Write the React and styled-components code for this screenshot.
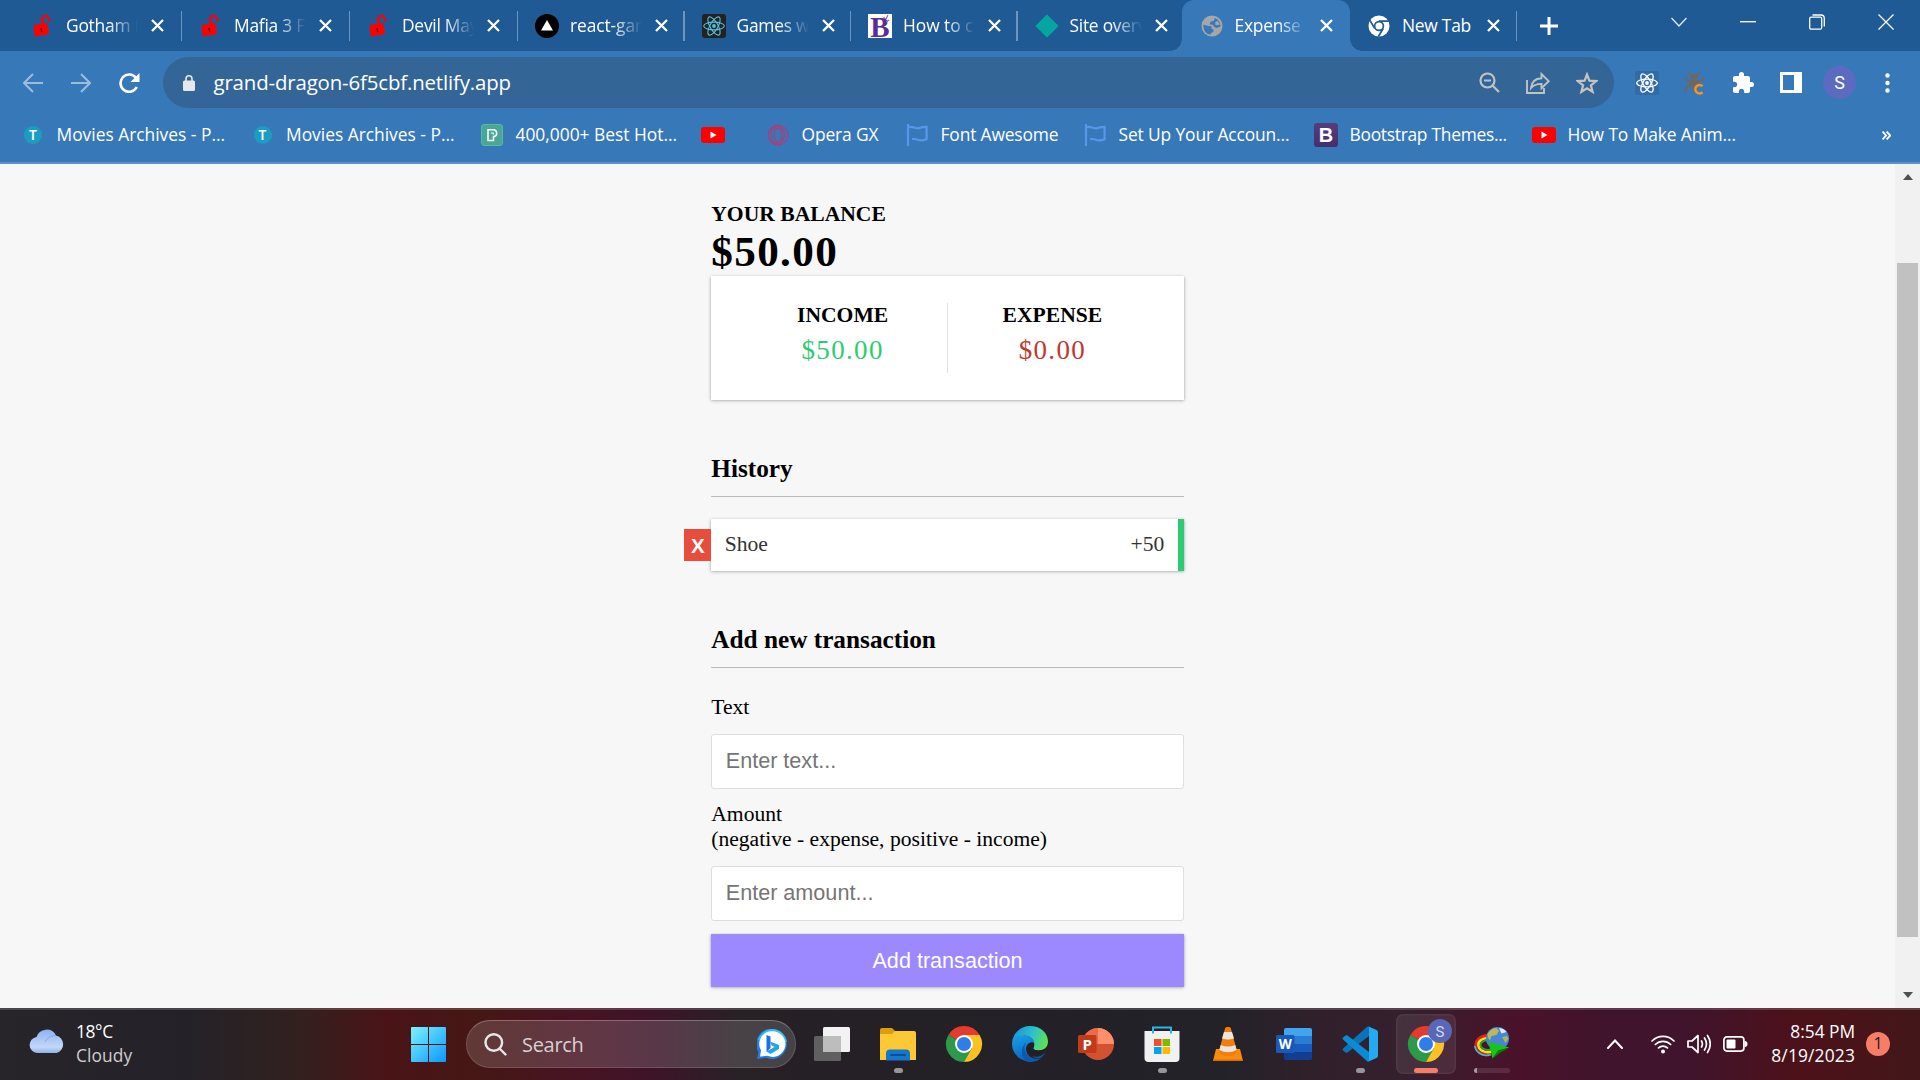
import React from "react";
import styled, { createGlobalStyle, css } from "styled-components";

const GlobalStyle = createGlobalStyle`
  * { box-sizing: border-box; }
  body { margin: 0; overflow: hidden; background: #f7f7f7; }
`;

const uiFont = css`
  font-family: "Open Sans", "Noto Sans", sans-serif;
  white-space: nowrap;
`;

const Screen = styled.div`
  width: 1920px;
  height: 1080px;
  display: flex;
  flex-direction: column;
  overflow: hidden;
`;

/* ---------- browser chrome ---------- */

const TabStrip = styled.div`
  display: flex;
  height: 51px;
  flex: none;
  padding-left: 14px;
  background: #1f5a95;
`;

const Tab = styled.div`
  position: relative;
  display: flex;
  align-items: center;
  width: ${(p) => p.$w}px;
  height: 51px;
  flex: none;
  padding-left: 17px;
  ${(p) =>
    p.$active &&
    css`
      z-index: 1;
      padding-left: 18px;
      background: #3778b9;
      border-radius: 12px 12px 0 0;
      &::before,
      &::after {
        content: "";
        position: absolute;
        bottom: 0;
        width: 12px;
        height: 12px;
      }
      &::before {
        left: -12px;
        background: radial-gradient(circle at 0 0, transparent 11.5px, #3778b9 12px);
      }
      &::after {
        right: -12px;
        background: radial-gradient(circle at 100% 0, transparent 11.5px, #3778b9 12px);
      }
    `}
`;

const TabIcon = styled.span`
  display: flex;
  width: 24px;
  height: 24px;
  flex: none;
`;

const TabTitle = styled.span`
  ${uiFont}
  width: 73px;
  margin-left: 11px;
  padding-bottom: 1px;
  overflow: hidden;
  color: #fff;
  font-size: 17.4px;
  line-height: 28px;
  letter-spacing: ${(p) => p.$ls ?? -0.25}px;
  ${(p) =>
    p.$fade &&
    css`
      mask-image: linear-gradient(90deg, #000 42px, transparent 72px);
    `}
`;

const TabClose = styled.span`
  display: flex;
  margin-left: 12px;
`;

const TabDivider = styled.span`
  width: 1.5px;
  height: 30px;
  margin: 1px 0 0 auto;
  background: #6d96bf;
`;

const NewTab = styled.div`
  display: flex;
  align-items: center;
  margin-left: 23px;
`;

const WindowControls = styled.div`
  display: flex;
  align-items: center;
  gap: 53px;
  height: 43px;
  margin: 0 26px 0 auto;
`;

const Toolbar = styled.div`
  display: flex;
  align-items: center;
  height: 63px;
  flex: none;
  padding-left: 23px;
  background: #3778b9;
`;

const NavButtons = styled.div`
  display: flex;
  gap: 28px;
`;

const Omnibox = styled.div`
  display: flex;
  align-items: center;
  width: 1451px;
  height: 51px;
  margin-left: 22.5px;
  padding: 0 16px 0 20px;
  border-radius: 26px;
  background: #336697;
`;

const Url = styled.span`
  ${uiFont}
  flex: 1;
  margin-left: 19px;
  padding-bottom: 1px;
  color: #fff;
  font-size: 20.4px;
  letter-spacing: -0.14px;
`;

const OmniActions = styled.div`
  display: flex;
  align-items: center;
  gap: 26px;
`;

const Extensions = styled.div`
  display: flex;
  align-items: center;
  gap: 25px;
  margin-left: 21.5px;
`;

const Avatar = styled.span`
  ${uiFont}
  width: 33px;
  height: 33px;
  margin: 0 -1px 0 -4px;
  border-radius: 50%;
  background: #5c6bc0;
  color: #fff;
  font-family: Roboto, sans-serif;
  font-size: 18px;
  line-height: 33px;
  text-align: center;
`;

const Bookmarks = styled.div`
  display: flex;
  align-items: center;
  height: 50px;
  flex: none;
  padding: 0 29px 6px 21px;
  border-bottom: 2px solid #5b92c7;
  background: #3778b9;
`;

const Bookmark = styled.div`
  display: flex;
  align-items: center;
  gap: 11.5px;
  flex: none;
  width: ${(p) => p.$w}px;
`;

const BookmarkIcon = styled.span`
  display: flex;
  justify-content: center;
  width: 24px;
  flex: none;
`;

const BookmarkLabel = styled.span`
  ${uiFont}
  padding-bottom: 2px;
  color: #fff;
  font-size: 17.4px;
  letter-spacing: ${(p) => p.$ls ?? -0.1}px;
`;

const More = styled.span`
  display: flex;
  margin-left: auto;
`;

/* ---------- page ---------- */

const Viewport = styled.div`
  display: flex;
  height: 844px;
  flex: none;
  background: #f7f7f7;
`;

const Page = styled.main`
  flex: 1;
  display: flex;
  justify-content: center;
  font-family: "Liberation Serif", "Times New Roman", serif;
  font-size: 21.6px;
  line-height: 25px;
  color: #000;
`;

const Column = styled.div`
  width: 472.5px;
  padding-top: 38px;
`;

const Caption = styled.h4`
  margin: 0;
  font-size: 21.6px;
  line-height: 25px;
  text-transform: uppercase;
`;

const Balance = styled.h1`
  margin: 0;
  font-size: 43.2px;
  line-height: 50px;
  height: 49px;
  letter-spacing: 1.35px;
`;

const Summary = styled.section`
  display: flex;
  height: 124px;
  padding: 27px;
  background: #fff;
  box-shadow: 0 1.35px 4px rgba(0, 0, 0, 0.14), 0 1.35px 2.7px rgba(0, 0, 0, 0.28);
`;

const SummaryCell = styled.div`
  flex: 1;
  text-align: center;
  & + & {
    border-left: 1px solid #dedede;
  }
`;

const Money = styled.p`
  margin: 7px 0 0;
  font-size: 27px;
  line-height: 31px;
  letter-spacing: 1.35px;
  color: ${(p) => (p.$plus ? "#2ecc71" : "#c0392b")};
`;

const Heading = styled.h3`
  height: 43px;
  margin: 54px 0 0;
  border-bottom: 1px solid #bbb;
  font-size: 25.27px;
  line-height: 29px;
`;

const List = styled.ul`
  margin: 22px 0 0;
  padding: 0;
  list-style: none;
`;

const Item = styled.li`
  position: relative;
  display: flex;
  justify-content: space-between;
  height: 52px;
  padding: 13px 13.5px;
  border-right: 6px solid #2ecc71;
  background: #fff;
  color: #333;
  box-shadow: 0 1.35px 4px rgba(0, 0, 0, 0.14), 0 1.35px 2.7px rgba(0, 0, 0, 0.28);
`;

const DeleteButton = styled.button`
  position: absolute;
  top: 10px;
  left: -27px;
  width: 27px;
  height: 32px;
  padding: 1px 0 0;
  border: 0;
  background: #e74c3c;
  color: #fff;
  font: bold 20.5px/30px "Liberation Sans", Arial, sans-serif;
`;

const Form = styled.form`
  margin-top: 27px;
`;

const Label = styled.label`
  display: block;
  margin-bottom: 14px;
`;

const Input = styled.input`
  display: block;
  width: 100%;
  height: 55px;
  margin-bottom: 13px;
  padding: 0 13.5px 2px;
  border: 1px solid #dedede;
  border-radius: 3px;
  background: #fff;
  font: 21.6px "Liberation Sans", Arial, sans-serif;
  &::placeholder {
    color: #757575;
    opacity: 1;
  }
`;

const Submit = styled.button`
  display: block;
  width: 100%;
  height: 53px;
  padding: 0;
  border: 0;
  background: #9c88ff;
  color: #fff;
  font: 21.6px "Liberation Sans", Arial, sans-serif;
  box-shadow: 0 1.35px 4px rgba(0, 0, 0, 0.14), 0 1.35px 2.7px rgba(0, 0, 0, 0.28);
`;

const Scrollbar = styled.div`
  display: flex;
  flex-direction: column;
  align-items: center;
  width: 25px;
  padding: 10px 0;
  background: #f1f1f1;
`;

const ScrollArrow = styled.span`
  border: 5.5px solid transparent;
  border-top: ${(p) => (p.$down ? "6px solid #505050" : "0")};
  border-bottom: ${(p) => (p.$down ? "0" : "6px solid #505050")};
`;

const Track = styled.div`
  flex: 1;
  padding-top: 83px;
`;

const Thumb = styled.div`
  width: 21px;
  height: 674px;
  background: #c1c1c1;
`;

/* ---------- taskbar ---------- */

const Taskbar = styled.footer`
  ${uiFont}
  display: flex;
  align-items: center;
  height: 72px;
  flex: none;
  padding: 0 30px 2px 29px;
  border-top: 2px solid rgba(255, 255, 255, 0.16);
  background-origin: border-box;
  background-image: linear-gradient(
    90deg,
    #27242a 0,
    #242228 190px,
    #33201f 300px,
    #4a1417 385px,
    #451715 480px,
    #471424 580px,
    #3e1428 650px,
    #282126 740px,
    #242026 860px,
    #232229 1220px,
    #30202a 1310px,
    #35202d 1400px,
    #4a122a 1520px,
    #40142c 1600px,
    #40142c 1690px,
    #4d1119 1800px,
    #42171a 1920px
  );
`;

const Weather = styled.div`
  display: flex;
  align-items: flex-start;
  gap: 11px;
  width: 382px;
  padding-bottom: 3px;
`;

const CloudBox = styled.span`
  display: flex;
  margin-top: 10px;
`;

const WeatherText = styled.div`
  display: flex;
  flex-direction: column;
  font-size: 17.4px;
  line-height: 24px;
  letter-spacing: -0.4px;
  color: #fff;
`;

const Muted = styled.span`
  color: #cfcdd0;
  letter-spacing: 0.1px;
`;

const SearchBox = styled.div`
  display: flex;
  align-items: center;
  width: 330px;
  height: 48px;
  margin: 0 3px 0 20px;
  padding: 0 8px 0 17px;
  border: 1.5px solid rgba(255, 255, 255, 0.14);
  border-top-color: rgba(255, 255, 255, 0.26);
  border-radius: 24px;
  background: rgba(255, 255, 255, 0.15);
`;

const SearchLabel = styled.span`
  flex: 1;
  margin-left: 15px;
  color: #d8d0d4;
  font-size: 20px;
  letter-spacing: -0.3px;
`;

const Apps = styled.div`
  display: flex;
`;

const AppSlot = styled.div`
  display: flex;
  flex-direction: column;
  align-items: center;
  width: 60px;
  height: 60px;
  margin: 0 3px;
  padding-top: 12px;
  border-radius: 7px;
  ${(p) =>
    p.$active &&
    css`
      background: rgba(255, 255, 255, 0.08);
      box-shadow: inset 0 0 0 1.5px rgba(255, 255, 255, 0.05);
    `}
`;

const Running = styled.span`
  width: ${(p) => p.$w}px;
  height: 5px;
  margin-top: 6px;
  border-radius: 3px;
  background: ${(p) => p.$c};
`;

const Tray = styled.div`
  display: flex;
  align-items: center;
  margin-left: auto;
  color: #fff;
`;

const TrayIcons = styled.div`
  display: flex;
  align-items: center;
  gap: 12px;
  margin: 0 24px 0 28px;
`;

const Clock = styled.div`
  display: flex;
  flex-direction: column;
  align-items: flex-end;
  width: 83px;
  padding-bottom: 2px;
  font-size: 17.4px;
  line-height: 24px;
`;

const ClockLine = styled.span`
  letter-spacing: ${(p) => p.$ls}px;
`;

const Notice = styled.span`
  width: 24px;
  height: 24px;
  margin-left: 11px;
  border-radius: 50%;
  background: #f57f66;
  color: #2b1512;
  font-size: 16px;
  line-height: 23px;
  text-align: center;
`;

/* ---------- icons ---------- */

const Cross = () => (
  <svg width="13" height="13" viewBox="0 0 13 13" stroke="#fff" strokeWidth="2.3">
    <path d="M1 1l11 11M12 1L1 12" />
  </svg>
);

const RedLock = () => (
  <svg width="24" height="24" viewBox="0 0 24 24">
    <path d="M11.8 10.500L11.100 6.800C10.600 3.600 12.300 2 14.300 1.900 16.700 1.800 18 3.400 18.500 7.400" fill="none" stroke="#f00" strokeWidth="2.300" />
    <path d="M2.300 11.200L16.200 8.800l1.600 10.200c.1.800-.2 1.300-1 1.500L5.100 22.300c-.8.100-1.300-.2-1.500-1z" fill="#f00" />
    <path d="M9.600 13.800a1.300 1.300 0 0 1 1.500 2l.4 2.200-1.500.3-.4-2.300a1.300 1.300 0 0 1 0-2.200z" fill="#7a0f22" />
  </svg>
);

const Vercel = () => (
  <svg width="24" height="24" viewBox="0 0 24 24">
    <circle cx="12" cy="12" r="12" />
    <path d="M12 6l6 10.500H6z" fill="#fff" />
  </svg>
);

const ReactIcon = ({ bg, color, sw = 1.1, r = 3 }) => (
  <svg width="24" height="24" viewBox="0 0 24 24" fill="none" stroke={color} strokeWidth={sw}>
    <rect width="24" height="24" rx={r} fill={bg} stroke="none" />
    <circle cx="12" cy="12" r="1.900" fill={color} stroke="none" />
    <ellipse cx="12" cy="12" rx="10.300" ry="3.900" />
    <ellipse cx="12" cy="12" rx="10.300" ry="3.900" transform="rotate(60 12 12)" />
    <ellipse cx="12" cy="12" rx="10.300" ry="3.900" transform="rotate(120 12 12)" />
  </svg>
);

const BTile = () => (
  <svg width="24" height="24" viewBox="0 0 24 24">
    <rect width="24" height="24" fill="#fff" />
    <text x="12" y="23" fill="#5c2d91" fontFamily="Liberation Serif, serif" fontWeight="700" fontSize="29" textAnchor="middle">B</text>
    <path d="M15 2l2 3M20 1l-2 4M21 6l-3 2" stroke="#8a68b3" strokeWidth="1.200" />
    <path d="M12.500 0h5l-2 3.500z" fill="#fff" />
  </svg>
);

const Diamond = () => (
  <svg width="24" height="24" viewBox="0 0 24 24">
    <path d="M12 .8L23.200 12 12 23.200.8 12z" fill="#05a5a0" stroke="#05a5a0" strokeLinejoin="round" />
  </svg>
);

const Globe = () => (
  <svg width="24" height="24" viewBox="0 0 24 24">
    <circle cx="12" cy="12" r="10.500" fill="#a5a6a8" />
    <path d="M3.500 10.500l4.500 1.500 3.500.2v2.600l2 .6-.3 2.600-2.600 1.300-.2 1.400C5.800 20 3.200 16.500 3.500 10.500z" fill="#3778b9" />
    <path d="M14.800 3.900l-1 3-3 .7-1.400 2.800 3.400.4 1.500 2.100 2.500 1 3.700-1.500C20.400 8.300 18.500 5.300 14.800 3.900z" fill="#3778b9" />
    <path d="M15.300 8l2.300-1.200 2.300 3.600-2.500.9-2.100-.5z" fill="#a5a6a8" />
  </svg>
);

const ChromeMono = () => (
  <svg width="24" height="24" viewBox="0 0 24 24">
    <circle cx="12" cy="12" r="10.500" fill="#fff" />
    <circle cx="12" cy="12" r="4.400" fill="#fff" stroke="#1f5a95" strokeWidth="1.700" />
    <path d="M12 7.100h9.800M7.700 14.400L2.800 6.200M16.200 14.500L11.400 22.500" stroke="#1f5a95" strokeWidth="1.700" />
  </svg>
);

const Youtube = () => (
  <svg width="24" height="16" viewBox="0 0 24 16">
    <rect width="24" height="16" rx="3" fill="#f00" />
    <path d="M9.500 4.500l6 3.500-6 3.500z" fill="#fff" />
  </svg>
);

const TBadge = styled.span`
  width: 18px;
  height: 18px;
  border-radius: 50%;
  background: #1b9dc0;
  color: #fff;
  font: bold 13px/18px Lato, sans-serif;
  text-align: center;
`;

const PexelsIcon = () => (
  <svg width="22" height="22" viewBox="0 0 22 22">
    <rect x=".5" y=".5" width="21" height="21" rx="2.500" fill="#4aa796" stroke="#57b99f" />
    <path d="M7 16.500V5.800h5.200a3.400 3.400 0 0 1 .9 6.700h-.6v4z" fill="none" stroke="#fff" strokeWidth="1.500" />
    <path d="M9.800 9h2.500v1.500" stroke="#fff" strokeWidth="1.100" fill="none" />
  </svg>
);

const Opera = () => (
  <svg width="22" height="22" viewBox="0 0 22 22" fill="none" stroke="#a4427d">
    <circle cx="11" cy="11" r="9.800" strokeWidth="1.300" />
    <ellipse cx="10.500" cy="11" rx="7" ry="8.500" strokeWidth="1.300" />
    <ellipse cx="11" cy="11" rx="4" ry="7" strokeWidth="1.300" />
  </svg>
);

const Flag = () => (
  <svg width="22" height="22" viewBox="0 0 22 22" fill="none" stroke="#5797ea" strokeWidth="2.200">
    <path d="M2 0v22M2 3.500c4-2.200 7 1.800 11 .6 2.500-.8 5-1.200 7.600-1.200v12.300c-3 1.300-6.200 1.500-8.800.6-2-.8-3.800-1-5.800-.6" />
  </svg>
);

const BootTile = styled.span`
  width: 24px;
  height: 24px;
  border-radius: 3px;
  background: linear-gradient(#563d7c, #452f6b);
  color: #fff;
  font: bold 20px/24px "Liberation Sans", sans-serif;
  text-align: center;
`;

const Puzzle = () => (
  <svg width="24" height="24" viewBox="0 0 24 24" fill="#fff">
    <path d="M20.500 11H19V7c0-1.100-.9-2-2-2h-4V3.500a2.500 2.500 0 0 0-5 0V5H4c-1.100 0-1.990.9-1.990 2v3.800H3.500c1.490 0 2.700 1.210 2.700 2.700s-1.210 2.700-2.700 2.700H2V20c0 1.100.9 2 2 2h3.800v-1.500c0-1.490 1.210-2.700 2.700-2.700 1.490 0 2.700 1.210 2.700 2.700V22H17c1.100 0 2-.9 2-2v-4h1.500a2.500 2.500 0 0 0 0-5z" />
  </svg>
);

const Bug = () => (
  <svg width="22" height="24" viewBox="0 0 22 24">
    <g fill="none" stroke="#6f6763" strokeWidth="1.800">
      <path d="M4 1l3.500 4M16 1l-3.500 4M1 6l2 3.500 5 1.500M20 6l-2 3.500-5 1.500M6 13l-4 3-1 6" />
    </g>
    <ellipse cx="10" cy="6" rx="4.300" ry="2.800" fill="#6f6763" />
    <path d="M5 9h10.500l-.5 6-4.500 6-4.500-6z" fill="#6f6763" />
    <path d="M18.500 15.200a4.200 4.200 0 1 0 0 6" fill="none" stroke="#f7931e" strokeWidth="2.600" />
  </svg>
);

const ChromeColor = ({ badge }) => (
  <svg width="36" height="36" viewBox="0 0 36 36" overflow="visible">
    <path d="M18 18L2.400 9A18 18 0 0 1 33.600 9z" fill="#e33b2e" />
    <path d="M18 18L2.400 9A18 18 0 0 0 18 36l8-13z" fill="#2c9a48" />
    <path d="M18 9h15.600A18 18 0 0 1 18 36l7.800-13.500z" fill="#fdc123" />
    <circle cx="18" cy="18" r="9" fill="#fff" />
    <circle cx="18" cy="18" r="7" fill="#2f7de9" />
    {badge && (
      <g>
        <circle cx="32" cy="5" r="12" fill="#5867b8" />
        <text x="32" y="10.700" fill="#d6daf0" fontFamily="Roboto, sans-serif" fontSize="15" textAnchor="middle">S</text>
      </g>
    )}
  </svg>
);

const Explorer = () => (
  <svg width="36" height="36" viewBox="0 0 36 36">
    <path d="M0 4q0-2 2-2h10l3 3v5H0z" fill="#dd9c0c" />
    <path d="M0 8h12l3-3h19q2 0 2 2v27H0z" fill="#fcc934" />
    <path d="M6 34.500v-7q0-4 4-4h16q4 0 4 4v7z" fill="#1277cd" />
    <rect x="10" y="28" width="16" height="2" rx="1" fill="#0a4f96" />
  </svg>
);

const TaskView = () => (
  <svg width="36" height="36" viewBox="0 0 36 36">
    <rect x="9" y="1" width="27" height="25" rx="1.500" fill="#f2f2f2" />
    <rect x="0" y="10" width="27" height="25" rx="1.500" fill="#606060" />
    <path d="M9 10h18v16H9z" fill="#bdbdbd" />
  </svg>
);

const Edge = () => (
  <svg width="36" height="36" viewBox="0 0 36 36">
    <defs>
      <linearGradient id="edgeTop" x1="0" y1="0.3" x2="1" y2="0.6">
        <stop offset="0" stopColor="#1793dc" />
        <stop offset=".55" stopColor="#2fc3c8" />
        <stop offset="1" stopColor="#62e24c" />
      </linearGradient>
      <linearGradient id="edgeLeft" x1="0" y1="0" x2="0.3" y2="1">
        <stop offset="0" stopColor="#1aa0ec" />
        <stop offset="1" stopColor="#0b63bb" />
      </linearGradient>
    </defs>
    <path d="M0 17A18 18 0 0 1 18 0c11 0 18 7.500 18 15.500 0 6-4.500 9-9.500 9-4 0-6-1.500-5-3 2-3.500.5-10-6.500-11.500C8 9 1.500 12 0 17z" fill="url(#edgeTop)" />
    <path d="M0 17C1.500 11.500 8 8.600 14 9.600c5 .9 8 4.400 8 7.400-2-2-8 0-8 6 0 7 7 11 14 9.500A18 18 0 0 1 0 18z" fill="url(#edgeLeft)" />
    <path d="M16 14.500c-5 4-5 13 2.500 17 5 2.500 9 1.500 11.500 0A18 18 0 0 1 17 36C9 34 6.500 22 16 14.500z" fill="#0d58a8" />
    <path d="M21.500 21.500c-1 1.500 1 3 5 3 2.500 0 4.500-.7 6.200-1.800C32 25.500 27 29.500 22 28c-6-2-6.500-8-3.500-11 2.500-.5 4 2 3 4.500z" fill="#201e26" />
    <path d="M33 26c-2 4-8 6-13 4 6 5 12 1 13-4z" fill="#0d58a8" />
  </svg>
);

const Powerpoint = () => (
  <svg width="36" height="36" viewBox="0 0 36 36">
    <circle cx="20" cy="18" r="16" fill="#d35230" />
    <path d="M20 2a16 16 0 0 1 16 16H20z" fill="#ff8f6b" />
    <path d="M20 2v16H4A16 16 0 0 1 20 2z" fill="#ed6c47" />
    <rect x="0" y="9" width="18.500" height="18" rx="1.500" fill="#c13b1b" />
    <text x="9.300" y="23.500" fill="#fff" fontFamily="Open Sans, sans-serif" fontWeight="700" fontSize="15" textAnchor="middle">P</text>
  </svg>
);

const Store = () => (
  <svg width="36" height="36" viewBox="0 0 36 36">
    <path d="M.5 5h35v27q0 4-4 4h-27q-4 0-4-4z" fill="#f1f1f1" />
    <path d="M9 7.500V1.500h18v6" fill="none" stroke="#2bb5ea" strokeWidth="2" />
    <path d="M10 13h7.500v7H10z" fill="#f25022" />
    <path d="M18.500 13H26v7h-7.500z" fill="#7fba00" />
    <path d="M10 21h7.500v7H10z" fill="#00a4ef" />
    <path d="M18.500 21H26v7h-7.500z" fill="#ffb900" />
  </svg>
);

const Vlc = () => (
  <svg width="36" height="36" viewBox="0 0 36 36">
    <path d="M6 23h24l3 12H3z" fill="#fb8c0a" />
    <path d="M3 33.500h30V35H3z" fill="#d96d05" />
    <path d="M16.500 1h3q1 0 1.400 1.500L27 25q-1 5-9 5t-9-5L15 2.500Q15.500 1 16.500 1z" fill="#f57c06" />
    <path d="M14 6h8l2 6.500q-6 2-12 0z" fill="#e9e5e2" />
    <path d="M10.800 19q7.200 3 14.400 0l1.500 5q-8.700 4.500-17.400 0z" fill="#e9e5e2" />
  </svg>
);

const Word = () => (
  <svg width="36" height="36" viewBox="0 0 36 36">
    <rect x="8" y="2" width="28" height="32" rx="2" fill="#103f91" />
    <path d="M8 4q0-2 2-2h24q2 0 2 2v6H8z" fill="#41a5ee" />
    <path d="M8 10h28v8H8z" fill="#2b7cd3" />
    <path d="M8 18h28v8H8z" fill="#185abd" />
    <rect x="0" y="9" width="18.500" height="18" rx="1.500" fill="#1b58bb" />
    <text x="9.300" y="23" fill="#fff" fontFamily="Open Sans, sans-serif" fontWeight="700" fontSize="13.500" textAnchor="middle">W</text>
  </svg>
);

const VsCode = () => (
  <svg width="36" height="36" viewBox="0 0 36 36">
    <path d="M1 24.500l2.500 2q1 .6 2 0L27 10V.5q-1.500-.3-2.500.8L1 22.500q-1 1 0 2z" fill="#0a74b8" />
    <path d="M1 11.500l2.500-2q1-.6 2 0L27 26v9.500q-1.500.3-2.500-.8L1 13.500q-1-1 0-2z" fill="#0b8ad6" />
    <path d="M26 .2L34.500 4q1.500.7 1.500 2.200v23.600q0 1.500-1.500 2.200L26 35.800q1-.3 1-2V2q0-1.500-1-1.800z" fill="#27a9f2" />
  </svg>
);

const Idm = () => (
  <svg width="36" height="36" viewBox="0 0 36 36" fill="none">
    <path d="M14 9.500C6 9.500.5 15 2 21s8 9.500 15 7" stroke="#e2231a" strokeWidth="3" />
    <path d="M14 12C8 12 3.500 15.500 4.500 20s6.500 7.500 13 5.500" stroke="#f6e21b" strokeWidth="2.600" />
    <path d="M14 14.300C9.500 14 6 16.500 6.500 19.500s5 5.500 11 4" stroke="#35a03c" strokeWidth="2" />
    <path d="M.8 20c1 6.500 8 11.500 16 8.500" stroke="#35c0e8" strokeWidth="1.600" />
    <circle cx="23.500" cy="12.500" r="11.500" fill="#4a86cf" />
    <path d="M13.500 8q3.500-6 9-6l2.500 3-2.500 4-5 1-1.500 4.500q-2.500-2.500-2.500-6.500z" fill="#b9b85c" />
    <path d="M25 2q5 .5 7.500 4l-5 1.500z" fill="#dcecf8" />
    <path d="M28 11l5-1 1.500 3-3 4z" fill="#a9b56a" />
    <path d="M14.500 16l21 5.500-11 3-6 8z" fill="#17c417" />
    <path d="M18.500 32.500l6-8 11-3-9 5z" fill="#0a7d10" />
  </svg>
);

const Bing = () => (
  <svg width="30" height="30" viewBox="0 0 30 30">
    <path d="M15 0a15 15 0 1 1-6 28.800L0 30l1.500-7A15 15 0 0 1 15 0z" fill="#1e7fe8" />
    <path d="M15 0a15 15 0 0 1 15 13L1 11A15 15 0 0 1 15 0z" fill="#35bdf0" />
    <path d="M15.500 2.300a12.800 12.800 0 1 1-5 24.500L3 27.500l1-6A12.800 12.800 0 0 1 15.500 2.300z" fill="#fff" />
    <path d="M9.500 6l4 1.600v11.500l-4 3.800z" fill="#1b6fe0" />
    <path d="M9.500 22.500l8-4.500-3-1.500-1.500-4 9 3.500v4L13.500 25z" fill="#22a5e8" />
  </svg>
);

/* ---------- data ---------- */

const tabs = [
  { title: "Gotham K", icon: <RedLock />, w: 168, divider: true, fade: true },
  { title: "Mafia 3 Fr", icon: <RedLock />, w: 168, divider: true, fade: true },
  { title: "Devil May", icon: <RedLock />, w: 168, divider: true, fade: true },
  { title: "react-gam", icon: <Vercel />, w: 166.5, divider: true, fade: true, ls: -0.1 },
  { title: "Games wi", icon: <ReactIcon bg="#222" color="#53c1de" />, w: 166.5, divider: true, fade: true },
  { title: "How to cr", icon: <BTile />, w: 166.5, divider: true, fade: true, ls: -0.05 },
  { title: "Site overv", icon: <Diamond />, w: 164, fade: true },
  { title: "Expense T", icon: <Globe />, w: 168.5, active: true, fade: true },
  { title: "New Tab", icon: <ChromeMono />, w: 167, divider: true },
];

const bookmarks = [
  { label: "Movies Archives - P...", icon: <TBadge>T</TBadge>, w: 229.5, ls: -0.01 },
  { label: "Movies Archives - P...", icon: <TBadge>T</TBadge>, w: 229.5, ls: -0.01 },
  { label: "400,000+ Best Hot...", icon: <PexelsIcon />, w: 221, ls: -0.01 },
  { icon: <Youtube />, w: 65 },
  { label: "Opera GX", icon: <Opera />, w: 139, ls: -0.12 },
  { label: "Font Awesome", icon: <Flag />, w: 178, ls: -0.15 },
  { label: "Set Up Your Accoun...", icon: <Flag />, w: 231, ls: -0.12 },
  { label: "Bootstrap Themes...", icon: <BootTile>B</BootTile>, w: 218, ls: -0.28 },
  { label: "How To Make Anim...", icon: <Youtube />, w: 230, ls: -0.1 },
];

const apps = [
  { icon: <TaskView /> },
  { icon: <Explorer />, dot: 9 },
  { icon: <ChromeColor /> },
  { icon: <Edge /> },
  { icon: <Powerpoint /> },
  { icon: <Store />, dot: 9 },
  { icon: <Vlc /> },
  { icon: <Word /> },
  { icon: <VsCode />, dot: 9 },
  { icon: <ChromeColor badge />, dot: 24, color: "#f57f66", active: true },
  { icon: <Idm />, dot: 36, color: "linear-gradient(90deg, #a39ba3 3px, rgba(255,255,255,.1) 3px)" },
];

export default function App() {
  return (
    <Screen>
      <GlobalStyle />
      <TabStrip>
        {tabs.map((t, i) => (
          <Tab key={i} $active={t.active} $w={t.w}>
            <TabIcon>{t.icon}</TabIcon>
            <TabTitle $fade={t.fade} $ls={t.ls}>{t.title}</TabTitle>
            <TabClose><Cross /></TabClose>
            {t.divider && <TabDivider />}
          </Tab>
        ))}
        <NewTab>
          <svg width="18" height="18" viewBox="0 0 18 18" stroke="#fff" strokeWidth="3">
            <path d="M9 0v18M0 9h18" />
          </svg>
        </NewTab>
        <WindowControls>
          <svg width="16" height="16" viewBox="0 0 16 16" fill="none" stroke="#e8eef5" strokeWidth="1.200">
            <path d="M.5 4l7.500 8 7.500-8" />
          </svg>
          <svg width="16" height="16" viewBox="0 0 16 16" stroke="#fff" strokeWidth="1.300">
            <path d="M0 7.700h16" />
          </svg>
          <svg width="16" height="16" viewBox="0 0 16 16" fill="none" stroke="#fff" strokeWidth="1.300">
            <rect x=".7" y="3.200" width="12" height="12" rx="1.500" />
            <path d="M3.500 1h8.500q3.300 0 3.300 3.300v8.200" />
          </svg>
          <svg width="16" height="16" viewBox="0 0 16 16" stroke="#fff" strokeWidth="1.300">
            <path d="M.5 .5l15 15M15.500 .5l-15 15" />
          </svg>
        </WindowControls>
      </TabStrip>

      <Toolbar>
        <NavButtons>
          <svg width="20" height="20" viewBox="0 0 20 20" fill="none" stroke="#9bbcdc" strokeWidth="2">
            <path d="M20 10H1.500M10 1L1 10l9 9" />
          </svg>
          <svg width="20" height="20" viewBox="0 0 20 20" fill="none" stroke="#9bbcdc" strokeWidth="2">
            <path d="M0 10h18.500M10 1l9 9-9 9" />
          </svg>
          <svg width="21" height="20" viewBox="0 0 21 20" fill="none" stroke="#fff" strokeWidth="2.600">
            <path d="M17.800 14A8.600 8.600 0 1 1 17 5" />
            <path d="M20.500 0v9h-9z" fill="#fff" stroke="none" />
          </svg>
        </NavButtons>
        <Omnibox>
          <svg width="12" height="16" viewBox="0 0 12 16">
            <rect y="5.500" width="12" height="10.500" rx="1.500" fill="#e6e8ea" />
            <path d="M3 6V3.800a3 3 0 0 1 6 0V6" fill="none" stroke="#e6e8ea" strokeWidth="1.600" />
          </svg>
          <Url>grand-dragon-6f5cbf.netlify.app</Url>
          <OmniActions>
            <svg width="21" height="21" viewBox="0 0 21 21" fill="none" stroke="#bfc3c6" strokeWidth="2.200">
              <circle cx="8.500" cy="8.500" r="7" />
              <path d="M13.500 13.500l6.500 6.500M5 8.500h7" />
            </svg>
            <svg width="24" height="22" viewBox="0 0 24 22" fill="none" stroke="#bfc3c6" strokeWidth="1.900">
              <path d="M1 8v13h17v-5" />
              <path d="M5 16c.5-6 4-9.500 10.500-9.800V2l7.200 7.200-7.200 7v-4.300C11 12 7.500 13 5 16z" />
            </svg>
            <svg width="22" height="22" viewBox="0 0 22 22" fill="none" stroke="#c6c4c0" strokeWidth="2.200">
              <path d="M11 2.500l2.400 6.200 6.600.4-5.100 4.200 1.700 6.500L11 16.200l-5.600 3.600 1.700-6.500L2 9.100l6.600-.4z" />
            </svg>
          </OmniActions>
        </Omnibox>
        <Extensions>
          <ReactIcon bg="#326ca7" color="#fff" sw={1.3} r={2} />
          <Bug />
          <Puzzle />
          <svg width="22" height="21" viewBox="0 0 22 21">
            <path d="M0 0h22v21H0zM3 3v15h11V3z" fill="#fff" fillRule="evenodd" />
          </svg>
          <Avatar>S</Avatar>
          <svg width="14" height="20" viewBox="0 0 14 20" fill="#fff">
            <circle cx="7.500" cy="2.500" r="2.200" />
            <circle cx="7.500" cy="10" r="2.200" />
            <circle cx="7.500" cy="17.500" r="2.200" />
          </svg>
        </Extensions>
      </Toolbar>

      <Bookmarks>
        {bookmarks.map((b, i) => (
          <Bookmark key={i} $w={b.w}>
            <BookmarkIcon>{b.icon}</BookmarkIcon>
            {b.label && <BookmarkLabel $ls={b.ls}>{b.label}</BookmarkLabel>}
          </Bookmark>
        ))}
        <More>
          <svg width="9" height="9" viewBox="0 0 9 9" fill="none" stroke="#fff" strokeWidth="1.900">
            <path d="M.6 .6l3.400 3.900L.6 8.400M4.700 .6l3.400 3.900-3.400 3.900" />
          </svg>
        </More>
      </Bookmarks>

      <Viewport>
        <Page>
          <Column>
            <Caption>Your Balance</Caption>
            <Balance>$50.00</Balance>
            <Summary>
              <SummaryCell>
                <Caption>Income</Caption>
                <Money $plus>$50.00</Money>
              </SummaryCell>
              <SummaryCell>
                <Caption>Expense</Caption>
                <Money>$0.00</Money>
              </SummaryCell>
            </Summary>
            <Heading>History</Heading>
            <List>
              <Item>
                <span>Shoe</span>
                <span>+50</span>
                <DeleteButton type="button">X</DeleteButton>
              </Item>
            </List>
            <Heading>Add new transaction</Heading>
            <Form>
              <Label>Text</Label>
              <Input placeholder="Enter text..." />
              <Label>
                Amount
                <br />
                (negative - expense, positive - income)
              </Label>
              <Input placeholder="Enter amount..." />
              <Submit type="button">Add transaction</Submit>
            </Form>
          </Column>
        </Page>
        <Scrollbar>
          <ScrollArrow />
          <Track><Thumb /></Track>
          <ScrollArrow $down />
        </Scrollbar>
      </Viewport>

      <Taskbar>
        <Weather>
          <CloudBox>
            <svg width="36" height="24" viewBox="0 0 36 24">
              <defs>
                <linearGradient id="cloud" x1="0" y1="0" x2="0" y2="1">
                  <stop offset="0" stopColor="#8db2f2" />
                  <stop offset=".75" stopColor="#c3d8f7" />
                  <stop offset="1" stopColor="#8fb0e6" />
                </linearGradient>
              </defs>
              <path d="M8 24a8 8 0 0 1-.5-15.900A10.500 10.500 0 0 1 27 6.500 9 9 0 0 1 27.500 24z" fill="url(#cloud)" />
              <path d="M16 13q3-6 10.500-6.500" stroke="#6f96dd" fill="none" opacity=".6" />
            </svg>
          </CloudBox>
          <WeatherText>
            <span>18°C</span>
            <Muted>Cloudy</Muted>
          </WeatherText>
        </Weather>
        <svg width="35" height="35" viewBox="0 0 35 35">
          <defs>
            <linearGradient id="win" x1="0" y1="0" x2="1" y2="1">
              <stop offset="0" stopColor="#7cf3ff" />
              <stop offset="1" stopColor="#0a97ff" />
            </linearGradient>
          </defs>
          <path d="M0 1q0-1 1-1h16v17H0zM18 0h16q1 0 1 1v16H18zM0 18h17v17H1q-1 0-1-1zM18 18h17v16q0 1-1 1H18z" fill="url(#win)" />
        </svg>
        <SearchBox>
          <svg width="23" height="23" viewBox="0 0 23 23" fill="none" stroke="#ece6e9" strokeWidth="2.400">
            <circle cx="9.800" cy="9.500" r="8.300" />
            <path d="M15.500 15.500l6 6" strokeLinecap="round" />
          </svg>
          <SearchLabel>Search</SearchLabel>
          <Bing />
        </SearchBox>
        <Apps>
          {apps.map((a, i) => (
            <AppSlot key={i} $active={a.active}>
              {a.icon}
              {a.dot && <Running $w={a.dot} $c={a.color || "#98959a"} />}
            </AppSlot>
          ))}
        </Apps>
        <Tray>
          <svg width="16" height="10" viewBox="0 0 16 10" fill="none" stroke="#fff" strokeWidth="2" strokeLinecap="round">
            <path d="M1 9l7-7.500L15 9" />
          </svg>
          <TrayIcons>
            <svg width="24" height="24" viewBox="0 0 24 24" fill="none" stroke="#fff" strokeWidth="1.700" strokeLinecap="round">
              <path d="M1 9a15.500 15.500 0 0 1 22 0M4.300 12.500a11 11 0 0 1 15.400 0M7.600 15.900a6.300 6.300 0 0 1 8.800 0" />
              <circle cx="12" cy="19.500" r="2" fill="#fff" stroke="none" />
            </svg>
            <svg width="24" height="24" viewBox="0 0 24 24" fill="none" stroke="#fff" strokeWidth="1.700" strokeLinecap="round" strokeLinejoin="round">
              <path d="M1 9v6h4l6 5.500v-17L5 9zM14.500 9q1.800 3 0 6M17.500 6q4 6 0 12M20.500 3.500q5.500 8.500 0 17" />
            </svg>
            <svg width="25" height="16" viewBox="0 0 25 16">
              <rect x=".9" y=".9" width="20" height="14.200" rx="3" fill="none" stroke="#fff" strokeWidth="1.700" />
              <rect x="3.500" y="3.500" width="9" height="9" rx="1" fill="#fff" />
              <path d="M21.500 5q3 0 3 3t-3 3z" fill="#fff" />
            </svg>
          </TrayIcons>
          <Clock>
            <ClockLine $ls={-0.05}>8:54 PM</ClockLine>
            <ClockLine $ls={0.15}>8/19/2023</ClockLine>
          </Clock>
          <Notice>1</Notice>
        </Tray>
      </Taskbar>
    </Screen>
  );
}
